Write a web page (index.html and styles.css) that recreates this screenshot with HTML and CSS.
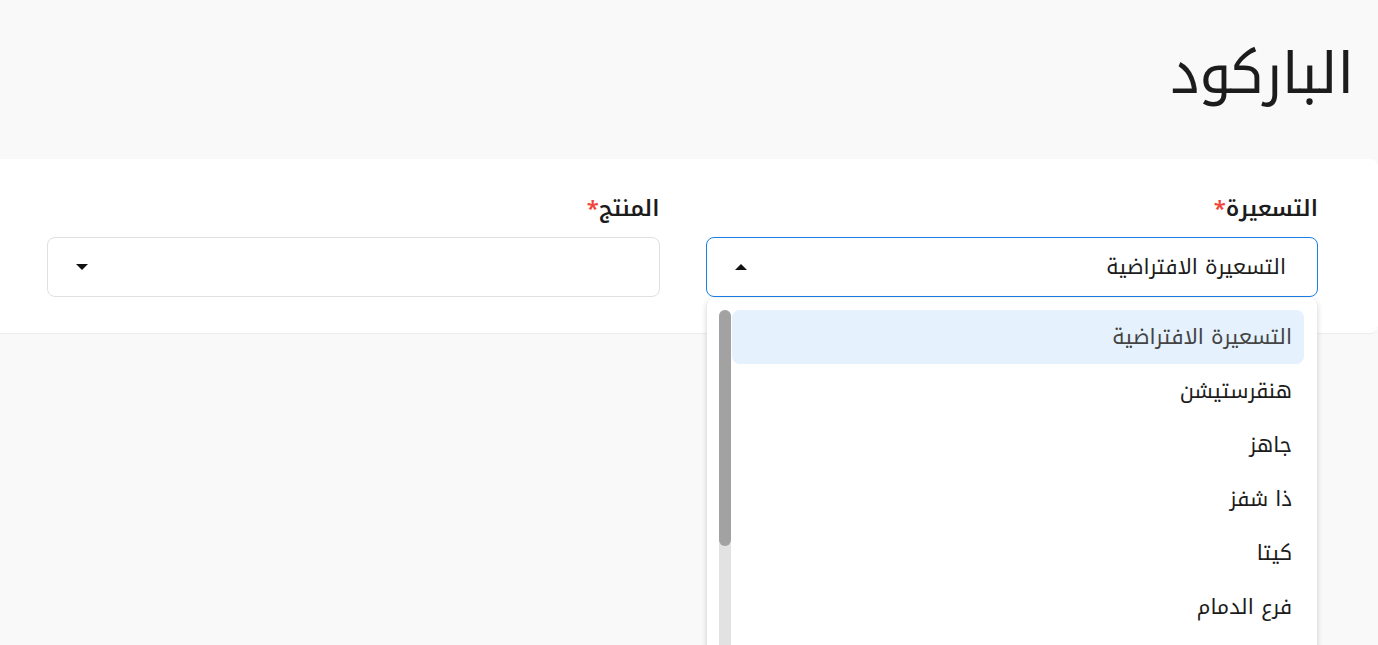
FILE: index.html
```html
<!DOCTYPE html>
<html lang="ar" dir="rtl">
<head>
<meta charset="utf-8">
<link rel="stylesheet" href="styles.css">
</head>
<body>
<header class="page-header">
  <h1 class="page-title">الباركود</h1>
</header>
<section class="card">
  <div class="fields">
    <div class="field">
      <label class="field-label">التسعيرة<span class="req">*</span></label>
      <div class="select select-open">
        <span class="select-value">التسعيرة الافتراضية</span>
        <span class="caret caret-up"></span>
        <div class="dropdown">
          <div class="scrollbar"><div class="scroll-thumb"></div></div>
          <ul class="options">
            <li class="option option-active">التسعيرة الافتراضية</li>
            <li class="option">هنقرستيشن</li>
            <li class="option">جاهز</li>
            <li class="option">ذا شفز</li>
            <li class="option">كيتا</li>
            <li class="option">فرع الدمام</li>
          </ul>
        </div>
      </div>
    </div>
    <div class="field">
      <label class="field-label">المنتج<span class="req">*</span></label>
      <div class="select">
        <span class="select-value"></span>
        <span class="caret caret-down"></span>
      </div>
    </div>
  </div>
</section>
</body>
</html>
```
FILE: styles.css
```css
* { box-sizing: border-box; }
html, body { margin: 0; padding: 0; }
body {
  background: #f9f9f9;
  font-family: "Noto Kufi Arabic", "Noto Sans", sans-serif;
  color: #1c1c1c;
  height: 645px;
  overflow: hidden;
}
.page-header {
  padding: 36px 24px 0 0;
  height: 159px;
}
.page-title {
  margin: 0;
  font-size: 57px;
  font-weight: 400;
  line-height: 76px;
}
.card {
  background: #fff;
  border-radius: 0 8px 8px 0;
  border-bottom: 1px solid #ececec;
  padding: 34px 60px 36px 47px;
}
.fields {
  display: grid;
  grid-template-columns: 1fr 1fr;
  column-gap: 46px;
}
.field-label {
  display: block;
  font-size: 22px;
  font-weight: 600;
  line-height: 32px;
  margin-bottom: 12px;
}
.req { color: #f44336; }
.select {
  position: relative;
  height: 60px;
  border: 1px solid #e0e0e0;
  border-radius: 8px;
  display: flex;
  align-items: center;
  padding: 0 31px 0 28px;
  font-size: 21px;
}
.select-open { border-color: #1a7fe6; }
.select-value { flex: 1; line-height: 30px; }
.caret {
  width: 0;
  height: 0;
  border-left: 6px solid transparent;
  border-right: 6px solid transparent;
}
.caret-up { border-bottom: 6px solid #111; }
.caret-down { border-top: 6px solid #111; }
.dropdown {
  position: absolute;
  top: 60px;
  right: 0;
  left: 0;
  height: 360px;
  background: #fff;
  border-radius: 8px;
  box-shadow: 0 2px 6px rgba(0,0,0,0.18);
  padding: 12px 13px 12px 25px;
  z-index: 5;
}
.scrollbar {
  position: absolute;
  left: 12px;
  top: 12px;
  bottom: 0;
  width: 12px;
  background: #e2e2e2;
  border-radius: 6px 6px 0 0;
}
.scroll-thumb {
  height: 236px;
  background: #a2a2a2;
  border-radius: 6px;
}
.options {
  list-style: none;
  margin: 0;
  padding: 0;
}
.option {
  height: 54px;
  display: flex;
  align-items: center;
  padding: 0 12px;
  font-size: 21px;
  border-radius: 8px;
  color: #1c1c1c;
}
.option-active {
  background: #e5f1fd;
  color: #444;
}
```
